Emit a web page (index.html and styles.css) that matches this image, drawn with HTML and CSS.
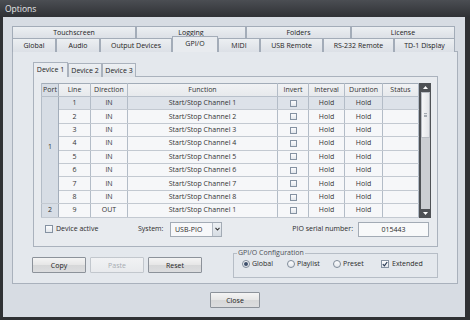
FILE: index.html
```html
<!DOCTYPE html>
<html lang="en">
<head>
    <meta charset="UTF-8">
    <title>Options</title>
    <link rel="stylesheet" href="styles.css">
</head>
<body>
    <div class="window">
        <div class="titlebar">Options</div>

        <div class="client">
            <div class="tab-row top">
                <span class="tab t-touch">Touchscreen</span>
                <span class="tab t-log">Logging</span>
                <span class="tab t-fold">Folders</span>
                <span class="tab t-lic">License</span>
            </div>
            <div class="tab-row bottom">
                <span class="tab t-global">Global</span>
                <span class="tab t-audio">Audio</span>
                <span class="tab t-output">Output Devices</span>
                <span class="tab t-gpio active">GPI/O</span>
                <span class="tab t-midi">MIDI</span>
                <span class="tab t-usb">USB Remote</span>
                <span class="tab t-rs">RS-232 Remote</span>
                <span class="tab t-td">TD-1 Display</span>
            </div>

            <div class="panel">
                <div class="subtabs">
                    <span class="subtab active">Device 1</span>
                    <span class="subtab">Device 2</span>
                    <span class="subtab">Device 3</span>
                </div>

                <div class="group">
                    <div class="grid-wrap">
                        <table class="grid">
                            <colgroup>
                                <col class="c-port"><col class="c-line"><col class="c-dir"><col class="c-func">
                                <col class="c-inv"><col class="c-int"><col class="c-dur"><col class="c-stat">
                            </colgroup>
                            <thead>
                                <tr>
                                    <th class="port">Port</th><th>Line</th><th>Direction</th><th>Function</th>
                                    <th>Invert</th><th>Interval</th><th>Duration</th><th>Status</th>
                                </tr>
                            </thead>
                            <tbody>
                                <tr class="selected">
                                    <td class="port port-1" rowspan="8">1</td>
                                    <td>1</td><td>IN</td><td>Start/Stop Channel 1</td>
                                    <td><span class="box"></span></td><td>Hold</td><td>Hold</td><td></td>
                                </tr>
                                <tr>
                                    <td>2</td><td>IN</td><td>Start/Stop Channel 2</td>
                                    <td><span class="box"></span></td><td>Hold</td><td>Hold</td><td></td>
                                </tr>
                                <tr>
                                    <td>3</td><td>IN</td><td>Start/Stop Channel 3</td>
                                    <td><span class="box"></span></td><td>Hold</td><td>Hold</td><td></td>
                                </tr>
                                <tr>
                                    <td>4</td><td>IN</td><td>Start/Stop Channel 4</td>
                                    <td><span class="box"></span></td><td>Hold</td><td>Hold</td><td></td>
                                </tr>
                                <tr>
                                    <td>5</td><td>IN</td><td>Start/Stop Channel 5</td>
                                    <td><span class="box"></span></td><td>Hold</td><td>Hold</td><td></td>
                                </tr>
                                <tr>
                                    <td>6</td><td>IN</td><td>Start/Stop Channel 6</td>
                                    <td><span class="box"></span></td><td>Hold</td><td>Hold</td><td></td>
                                </tr>
                                <tr>
                                    <td>7</td><td>IN</td><td>Start/Stop Channel 7</td>
                                    <td><span class="box"></span></td><td>Hold</td><td>Hold</td><td></td>
                                </tr>
                                <tr>
                                    <td>8</td><td>IN</td><td>Start/Stop Channel 8</td>
                                    <td><span class="box"></span></td><td>Hold</td><td>Hold</td><td></td>
                                </tr>
                                <tr>
                                    <td class="port">2</td>
                                    <td>9</td><td>OUT</td><td>Start/Stop Channel 1</td>
                                    <td><span class="box"></span></td><td>Hold</td><td>Hold</td><td></td>
                                </tr>
                            </tbody>
                        </table>

                        <div class="vscroll">
                            <div class="arrow">
                                <svg width="5" height="3" viewBox="0 0 5 3"><polygon points="0,3 5,3 2.5,0" fill="#fff"/></svg>
                            </div>
                            <div class="thumb"><span class="grip"></span></div>
                            <div class="track"></div>
                            <div class="arrow">
                                <svg width="5" height="3" viewBox="0 0 5 3"><polygon points="0,0 5,0 2.5,3" fill="#fff"/></svg>
                            </div>
                        </div>
                    </div>

                    <div class="device-row">
                        <label class="active-check"><span class="box"></span>Device active</label>
                        <span class="system-label">System:</span>
                        <div class="select">
                            <span class="select-text">USB-PIO</span>
                            <span class="select-btn">
                                <svg width="5" height="4" viewBox="0 0 5 4"><polyline points="0.5,0.8 2.5,3 4.5,0.8" fill="none" stroke="#333" stroke-width="1.1"/></svg>
                            </span>
                        </div>
                        <span class="serial-label">PIO serial number:</span>
                        <div class="textbox">015443</div>
                    </div>
                </div>

                <div class="actions">
                    <div class="buttons">
                        <button class="btn">Copy</button>
                        <button class="btn" disabled>Paste</button>
                        <button class="btn">Reset</button>
                    </div>
                    <fieldset class="config">
                        <legend>GPI/O Configuration</legend>
                        <div class="options">
                            <label class="opt o-global"><span class="radio checked"></span>Global</label>
                            <label class="opt o-playlist"><span class="radio"></span>Playlist</label>
                            <label class="opt o-preset"><span class="radio"></span>Preset</label>
                            <label class="opt"><span class="box checked">
                                <svg width="6" height="6" viewBox="0 0 6 6"><polyline points="0.8,3.2 2.4,4.8 5.2,1" fill="none" stroke="#2a3a55" stroke-width="1.2"/></svg>
                            </span>Extended</label>
                        </div>
                    </fieldset>
                </div>
            </div>

            <div class="footer">
                <button class="btn close">Close</button>
            </div>
        </div>
    </div>
</body>
</html>
```

FILE: styles.css
```css
* {
    box-sizing: border-box;
}

body {
    margin: 0;
    background: #2d2f32;
    font-family: "Open Sans", "Noto Sans", sans-serif;
    font-size: 7px;
    line-height: 10px;
    color: #2a2a2a;
}

.window {
    width: 470px;
    height: 320px;
    display: flex;
    flex-direction: column;
    padding: 0 5px 3px 3px;
    background: #2f3134;
}

.titlebar {
    height: 17px;
    margin: 0 -5px 0 -3px;
    padding-left: 5px;
    background: linear-gradient(#4b4e53, #2f3135);
    color: #e6e7e9;
    font-size: 8.5px;
    line-height: 17px;
}

.client {
    flex: 1;
    background: #d7dce3;
    padding: 9px 7px 0 9px;
}

/* main tabs */
.tab-row {
    display: flex;
}

.tab-row.top {
    height: 12px;
}

.tab-row.bottom {
    height: 14px;
    margin-bottom: -1px;
}

.tab {
    display: flex;
    align-items: center;
    justify-content: center;
    border: 1px solid #a3acb8;
    border-bottom: none;
    background: linear-gradient(#eceff2, #dce0e6);
    color: #222;
}

.tab.active {
    position: relative;
    z-index: 1;
    height: 16px;
    margin-top: -2px;
    background: #e8ebef;
    padding-bottom: 2px;
}

.t-touch { width: 124px; }
.t-log { width: 110px; }
.t-fold { width: 105px; }
.t-lic { width: 104px; }

.t-global { width: 44px; }
.t-audio { width: 44px; }
.t-output { width: 72px; }
.t-gpio { width: 46px; }
.t-midi { width: 42px; }
.t-usb { width: 63px; }
.t-rs { width: 71px; }
.t-td { width: 61px; }

.panel {
    width: 446px;
    height: 233px;
    border: 1px solid #a9b1bc;
    background: #e4e8ed;
    padding: 11px 19px 0 20px;
}

/* device tabs */
.subtabs {
    display: flex;
    height: 14px;
    margin-bottom: -1px;
}

.subtab {
    width: 34px;
    display: flex;
    align-items: center;
    justify-content: center;
    border: 1px solid #aab2bd;
    border-bottom: none;
    background: linear-gradient(#edf0f3, #dde1e6);
    color: #222;
}

.subtab.active {
    position: relative;
    z-index: 1;
    width: 35px;
    height: 15px;
    margin-top: -1px;
    background: #e9ecf0;
}

.group {
    width: 405px;
    height: 171px;
    border: 1px solid #aab2bd;
    background: #e8ebef;
    padding: 6px 0 0 7px;
}

.grid-wrap {
    display: flex;
    height: 135px;
}

/* io table */
.grid {
    width: 377px;
    table-layout: fixed;
    border-collapse: collapse;
    border: 1px solid #a2acb8;
    align-self: flex-start;
}

.c-port { width: 17px; }
.c-line { width: 32px; }
.c-dir { width: 37px; }
.c-func { width: 150px; }
.c-inv { width: 31px; }
.c-int { width: 36px; }
.c-dur { width: 38px; }
.c-stat { width: 36px; }

.grid th,
.grid td {
    padding: 0;
    text-align: center;
    font-weight: normal;
    white-space: nowrap;
    border-left: 1px solid #b3bcc7;
    border-right: 1px solid #b3bcc7;
    color: #333;
}

.grid thead tr {
    height: 13px;
    background: linear-gradient(#f1f2f4, #e6e9ec);
}

.grid thead th {
    border-bottom: 1px solid #b8c0ca;
}

.grid tbody tr {
    height: 13.4px;
    background: #f6f7f9;
}

.grid tbody td {
    border-bottom: 1px solid #c3c9d1;
}

.grid tbody tr.selected {
    background: #dde2e9;
}

.grid .port {
    background: #d7dde5;
    border-right-color: #a3adba;
}

.grid td.port-1 {
    padding-bottom: 6px;
}

.box {
    display: inline-flex;
    align-items: center;
    justify-content: center;
    width: 8px;
    height: 8px;
    border: 1px solid #8592a2;
    background: linear-gradient(#fdfdfe, #e3e7ec);
    vertical-align: middle;
}

.grid .box {
    width: 7px;
    height: 7px;
}

/* scrollbar */
.vscroll {
    width: 12px;
    height: 135px;
    display: flex;
    flex-direction: column;
    background: #4e5155;
    padding: 0 1px 0 2px;
}

.vscroll .arrow {
    height: 9px;
    display: flex;
    align-items: center;
    justify-content: center;
}

.thumb {
    height: 46px;
    display: flex;
    align-items: center;
    justify-content: center;
    background: linear-gradient(90deg, #f5f6f7, #e3e5e8);
    border: 1px solid #b9bdc3;
}

.grip {
    width: 3px;
    height: 4px;
    border-top: 1px solid #a5abb2;
    border-bottom: 1px solid #a5abb2;
    background: linear-gradient(#e4e6e9 1px, #a5abb2 1px, #a5abb2 2px, #e4e6e9 2px);
}

.track {
    flex: 1;
    background: #cbced2;
}

/* device options row */
.device-row {
    display: flex;
    align-items: center;
    width: 388px;
    height: 16px;
    margin-top: 3px;
    padding-left: 4px;
}

.active-check {
    display: flex;
    align-items: center;
    width: 93px;
}

.active-check .box {
    margin-right: 3px;
}

.system-label {
    width: 32px;
}

.select {
    display: flex;
    width: 52px;
    height: 15px;
    border: 1px solid #a3abb5;
    background: #f7f8fa;
}

.select-text {
    flex: 1;
    padding-left: 4px;
    line-height: 13px;
}

.select-btn {
    width: 9px;
    display: flex;
    align-items: center;
    justify-content: center;
    border-left: 1px solid #b3bac4;
    background: linear-gradient(#eef1f4, #d6dce3);
}

.serial-label {
    flex: 1;
    text-align: right;
    padding-right: 5px;
}

.textbox {
    width: 71px;
    height: 15px;
    border: 1px solid #a3abb5;
    background: #f8f9fa;
    text-align: center;
    line-height: 13px;
}

/* lower actions */
.actions {
    display: flex;
    align-items: flex-start;
    margin-top: 1px;
}

.buttons {
    display: flex;
    gap: 4px;
    margin: 9px 0 0 -1px;
}

.btn {
    width: 54px;
    height: 16px;
    padding: 0;
    border: 1px solid #8c929a;
    border-radius: 1px;
    background: linear-gradient(#f4f4f4, #e6e6e6 50%, #d6d7d8 51%, #dcdddf);
    font-family: inherit;
    font-size: 7px;
    color: #222;
}

.btn:disabled {
    border-color: #c2c7cd;
    background: linear-gradient(#f1f2f4, #e8eaed);
    color: #a7abb1;
}

.config {
    width: 205px;
    height: 30px;
    margin: 0 0 0 auto;
    padding: 1px 0 0 8px;
    border: 1px solid #b6bdc6;
    min-inline-size: 0;
}

.config legend {
    padding: 0 1px;
    margin-left: -5px;
    color: #4b4f55;
}

.options {
    display: flex;
    align-items: center;
    height: 10px;
}

.opt {
    display: flex;
    align-items: center;
}

.o-global { width: 45px; }
.o-playlist { width: 46px; }
.o-preset { width: 48px; }

.radio {
    width: 8px;
    height: 8px;
    margin-right: 2px;
    border: 1px solid #7f8b99;
    border-radius: 50%;
    background: linear-gradient(#fdfdfe, #e3e7ec);
    display: flex;
    align-items: center;
    justify-content: center;
}

.radio.checked::after {
    content: "";
    width: 4px;
    height: 4px;
    border-radius: 50%;
    background: #3d4f6b;
}

.opt .box {
    margin-right: 3px;
}

.footer {
    display: flex;
    justify-content: center;
    padding-top: 8px;
}

.close {
    width: 50px;
}
```
